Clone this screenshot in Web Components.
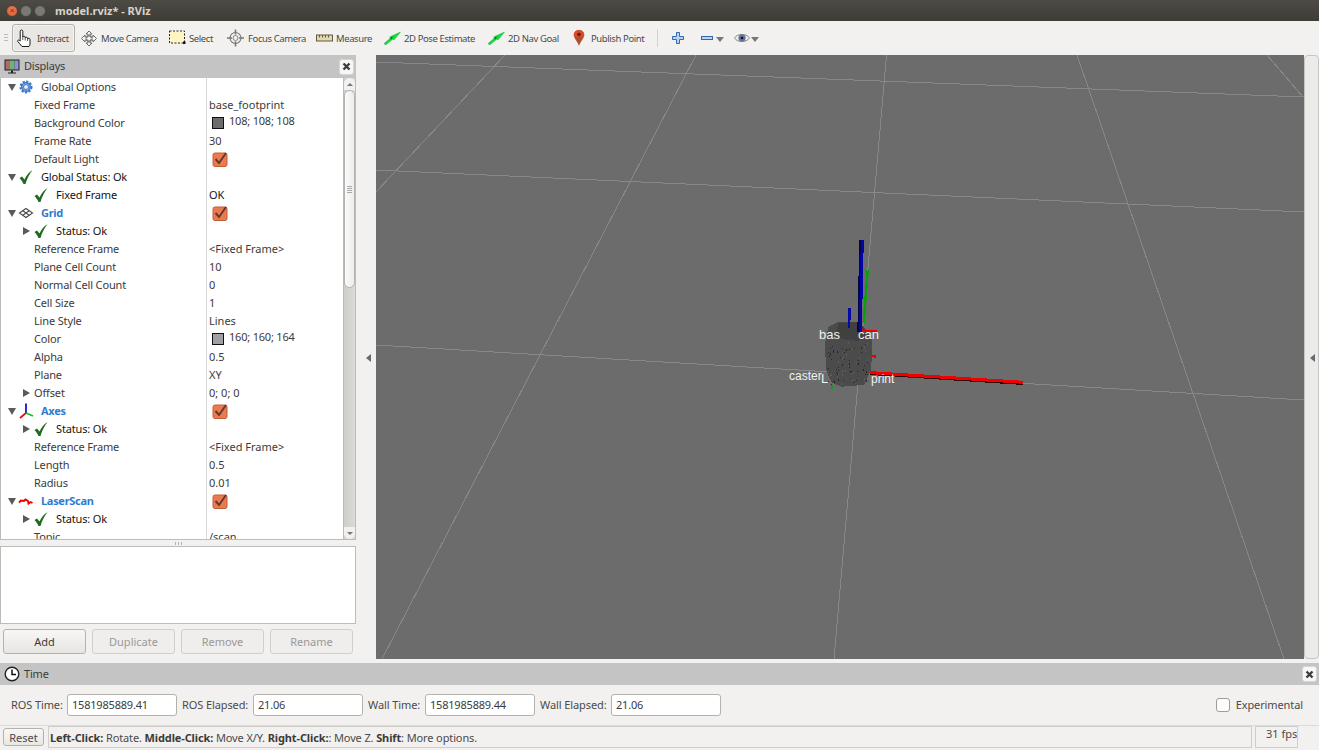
<!DOCTYPE html>
<html>
<head>
<meta charset="utf-8">
<title>model.rviz* - RViz</title>
<style>
  html, body { margin: 0; padding: 0; background: #f2f1f0; overflow: hidden; }
  body { font-family: "Noto Sans", sans-serif; font-size: 11px; color: #3c3b37; }
</style>
</head>
<body>
<rviz-app>
  <title-bar slot="title" text="model.rviz* - RViz"></title-bar>
  <tool-bar slot="tools">
    <tool-button icon="hand" label="Interact" width="63" active></tool-button>
    <tool-button icon="move" label="Move Camera" width="88"></tool-button>
    <tool-button icon="select" label="Select" width="58"></tool-button>
    <tool-button icon="focus" label="Focus Camera" width="89"></tool-button>
    <tool-button icon="measure" label="Measure" width="68"></tool-button>
    <tool-button icon="arrow" label="2D Pose Estimate" width="104"></tool-button>
    <tool-button icon="arrow" label="2D Nav Goal" width="85"></tool-button>
    <tool-button icon="pin" label="Publish Point" width="82"></tool-button>
  </tool-bar>
  <displays-panel slot="left">
    <prop-row arrow="open" icon="gear" label="Global Options"></prop-row>
    <prop-row level="1" label="Fixed Frame" value="base_footprint"></prop-row>
    <prop-row level="1" label="Background Color" swatch="#6c6c6c" value="108; 108; 108"></prop-row>
    <prop-row level="1" label="Frame Rate" value="30"></prop-row>
    <prop-row level="1" label="Default Light" checked></prop-row>
    <prop-row arrow="open" icon="check" label="Global Status: Ok" dark></prop-row>
    <prop-row level="1" icon="check" label="Fixed Frame" value="OK" dark></prop-row>
    <prop-row arrow="open" icon="grid" label="Grid" group checked></prop-row>
    <prop-row level="1" arrow="closed" icon="check" label="Status: Ok" dark></prop-row>
    <prop-row level="1" label="Reference Frame" value="&lt;Fixed Frame&gt;"></prop-row>
    <prop-row level="1" label="Plane Cell Count" value="10"></prop-row>
    <prop-row level="1" label="Normal Cell Count" value="0"></prop-row>
    <prop-row level="1" label="Cell Size" value="1"></prop-row>
    <prop-row level="1" label="Line Style" value="Lines"></prop-row>
    <prop-row level="1" label="Color" swatch="#a0a0a4" value="160; 160; 164"></prop-row>
    <prop-row level="1" label="Alpha" value="0.5"></prop-row>
    <prop-row level="1" label="Plane" value="XY"></prop-row>
    <prop-row level="1" arrow="closed" label="Offset" value="0; 0; 0"></prop-row>
    <prop-row arrow="open" icon="axes" label="Axes" group checked></prop-row>
    <prop-row level="1" arrow="closed" icon="check" label="Status: Ok" dark></prop-row>
    <prop-row level="1" label="Reference Frame" value="&lt;Fixed Frame&gt;"></prop-row>
    <prop-row level="1" label="Length" value="0.5"></prop-row>
    <prop-row level="1" label="Radius" value="0.01"></prop-row>
    <prop-row arrow="open" icon="laser" label="LaserScan" group checked></prop-row>
    <prop-row level="1" arrow="closed" icon="check" label="Status: Ok" dark></prop-row>
    <prop-row level="1" label="Topic" value="/scan"></prop-row>
  </displays-panel>
  <view-3d slot="view"></view-3d>
  <time-panel slot="time"></time-panel>
  <status-bar slot="status"></status-bar>
</rviz-app>

<script>
const ICONS = {
  hand: '<path d="M3.200 10.500V2.200c0-1.600 2.600-1.600 2.600 0V8c.2-1 2.200-1 2.400 0v1c.2-1 2.200-1 2.400.1v1c.2-1 2.200-1 2.400.1V15c0 1-.5 1.500-1 2.500H5C3.500 15.500 2 14 .8 12.500c-.7-1.200.8-2.300 2.400-.5z" fill="#fff" stroke="#1a1a1a" stroke-width="1" stroke-linejoin="round"/><path d="M5.800 8v3M8.200 9v2.500M10.600 10v2" stroke="#1a1a1a" stroke-width=".7"/>',
  move: '<path d="M10 .5l3 3h-2v3h3v-2l3.500 3.500-3.500 3.500v-2h-3v3h2l-3 3-3-3h2v-3H6v2L2.500 8 6 4.500v2h3v-3H7z" transform="translate(-2 1.500)" fill="#f4f4f2" stroke="#6b6b6b" stroke-width="1"/><circle cx="8" cy="9.500" r="3" fill="none" stroke="#777" stroke-width="1"/>',
  select: '<rect x=".5" y="2" width="15" height="12" fill="#fdf6c3" stroke="#222" stroke-width="1" stroke-dasharray="2 1.500"/><rect x="14" y="12.500" width="2.500" height="2.500" fill="#111"/>',
  focus: '<circle cx="8.500" cy="9" r="5.500" fill="#eee" stroke="#777" stroke-width="1.100"/><circle cx="8.500" cy="9" r="2.500" fill="none" stroke="#888"/><path d="M8.500 .5v5M8.500 12.500v5M0 9h5M12 9h5" stroke="#777" stroke-width="1.600"/>',
  measure: '<rect x=".5" y="6" width="16" height="6" fill="#e3d9a6" stroke="#5d5a4c" stroke-width="1"/><path d="M3.500 6v2.500M6.500 6v2.500M9.500 6v2.500M12.500 6v2.500" stroke="#5d5a4c" stroke-width="1"/>',
  arrow: '<path d="M0 14.500L6.500 9 5.500 8 16.500 3 10 11 9 10 1.500 16z" fill="#11e036" stroke="#0aa627" stroke-width=".4"/><path d="M6.500 10l2-1.800" stroke="#064" stroke-width="1.200"/>',
  pin: '<path d="M6 1C3 1 .8 3.200.8 6c0 3.300 3.300 5.500 5.200 11 1.900-5.500 5.200-7.700 5.200-11C11.200 3.200 9 1 6 1z" fill="#a9502c"/><path d="M6 1C3 1 .8 3.200.8 6c0 .7.2 1.400.5 2h9.400c.3-.6.5-1.300.5-2C11.200 3.200 9 1 6 1z" fill="#d9492c"/><circle cx="6" cy="5.500" r="1.800" fill="#5a2413"/>',
  plus: '<path d="M4.500 .5h3v4h4v3h-4v4h-3v-4h-4v-3h4z" fill="#bcd3ee" stroke="#2f6ab0" stroke-width="1"/>',
  minus: '<rect x=".5" y="1.500" width="11" height="3" fill="#bcd3ee" stroke="#2f6ab0" stroke-width="1"/>',
  eye: '<path d="M.5 6C3 1.500 12 1 15.500 6 12 11 3 10.500.5 6z" fill="#eee" stroke="#888"/><circle cx="8" cy="6" r="3.300" fill="#5d74ad" stroke="#666" stroke-width=".6"/><circle cx="8" cy="6" r="1.300" fill="#111"/>',
  gear: '<circle cx="7" cy="8" r="5" fill="#8db2e4" stroke="#3f78c4" stroke-width="3" stroke-dasharray="2 1.300"/><circle cx="7" cy="8" r="4.500" fill="none" stroke="#3f78c4" stroke-width="1"/><circle cx="7" cy="8" r="2.500" fill="#e6eef9" stroke="#3f78c4" stroke-width="1"/>',
  check: '<path d="M.5 8.500l2.500-1.500 2.500 3C7.500 6 10 2.500 13.500.5 10.500 4.500 8 9 6.500 14.500H4.500C3.500 12 2 10 .5 8.500z" fill="#1f6b1f" transform="translate(0 .5)"/>',
  grid: '<path d="M.5 8L7 3.500 13.500 8 7 12.500z" fill="none" stroke="#4b4b4b" stroke-width="1.100"/><path d="M3.800 5.700L10.200 10.300M10.200 5.700L3.800 10.300" stroke="#4b4b4b" stroke-width="1.100"/>',
  axes: '<path d="M7 .5V10" stroke="#1414c8" stroke-width="1.800"/><path d="M7 10L1 15" stroke="#e01010" stroke-width="1.800"/><path d="M7 10l7 3" stroke="#10c030" stroke-width="1.800"/>',
  laser: '<path d="M0 9.500l2-2 3 .5 1.500-1.500 2.500 1.500.5 2.500 2-1.500 2 1" fill="none" stroke="#ee0000" stroke-width="1.900"/>',
  monitor: '<rect x=".5" y=".5" width="15" height="11" fill="#222"/><rect x="1.500" y="1.500" width="4.500" height="9" fill="#b06a6a"/><rect x="6" y="1.500" width="4.500" height="9" fill="#6fb36f"/><rect x="10.500" y="1.500" width="4" height="9" fill="#8f8fd6"/><path d="M7 11.500h2v2h3v1H4v-1h3z" fill="#222"/>',
  clock: '<circle cx="8" cy="8" r="6.800" fill="#fff" stroke="#222" stroke-width="1.400"/><path d="M8 3.500V8.500H12" fill="none" stroke="#111" stroke-width="1.500"/>'
};

const svgIcon = (name, w, h) => `<svg width="${w}" height="${h}" viewBox="0 0 ${w} ${h}" style="display:block;overflow:visible;flex:none">${ICONS[name]}</svg>`;

class RvizApp extends HTMLElement {
  constructor() { super(); this.attachShadow({ mode: 'open' }); }
  connectedCallback() {
    this.shadowRoot.innerHTML = `
      <style>
        :host { display: flex; flex-direction: column; width: 1319px; height: 750px; background: #f2f1f0; overflow: hidden; }
        .main { display: flex; height: 604px; }
        .view { flex: 1; display: flex; min-width: 0; }
        .handle { width: 20px; box-sizing: border-box; padding: 2px 0 0 4px; display: flex; align-items: center; justify-content: center; }
        .tri { width: 0; height: 0; border-style: solid; border-width: 4px 5px 4px 0; border-color: transparent #6a6a6a transparent transparent; }
        .right { width: 15px; box-sizing: border-box; padding: 2px 0 0 1px; display: flex; align-items: center; justify-content: center; background: #ecebe9; border: 1px solid #c6c5c2; border-radius: 4px; }
      </style>
      <slot name="title"></slot>
      <slot name="tools"></slot>
      <div class="main">
        <slot name="left"></slot>
        <div class="handle"><div class="tri"></div></div>
        <div class="view"><slot name="view"></slot></div>
        <div class="right"><div class="tri"></div></div>
      </div>
      <slot name="time"></slot>
      <slot name="status"></slot>`;
  }
}

class TitleBar extends HTMLElement {
  constructor() { super(); this.attachShadow({ mode: 'open' }); }
  connectedCallback() {
    this.shadowRoot.innerHTML = `
      <style>
        :host { display: flex; align-items: center; height: 21px; background: linear-gradient(#4e4b45, #3d3c37); padding-left: 6px; box-sizing: border-box; }
        .b { width: 12px; height: 12px; border-radius: 50%; margin-right: 2px; background: #7b7974; border: 1px solid #45443f; box-sizing: border-box; }
        .b.c { background: radial-gradient(circle at 50% 40%, #ee8258, #d8552b); display: flex; align-items: center; justify-content: center; font: bold 8px "Liberation Sans", sans-serif; color: #8a3a20; }
        .t { margin-left: 9px; font: bold 11px "Noto Sans", sans-serif; color: #d8d4ca; white-space: nowrap; }
      </style>
      <div class="b c">×</div><div class="b"></div><div class="b" style="margin-right:0"></div>
      <div class="t">${this.getAttribute('text')}</div>`;
  }
}

class ToolBar extends HTMLElement {
  constructor() { super(); this.attachShadow({ mode: 'open' }); }
  connectedCallback() {
    this.shadowRoot.innerHTML = `
      <style>
        :host { display: flex; align-items: center; height: 34px; background: #f2f1f0; box-sizing: border-box; padding-left: 4px; }
        .grip { width: 4px; height: 9px; margin-right: 4px; background: repeating-linear-gradient(#bdbbb7 0 1px, transparent 1px 3px); flex: none; }
        .sep { width: 1px; height: 18px; background: #d3d1ce; margin: 0 14px 0 7px; flex: none; }
        .i { display: flex; align-items: center; flex: none; }
        .down { width: 0; height: 0; border-style: solid; border-width: 5px 4px 0 4px; border-color: #77767a transparent transparent transparent; margin: 3px 0 0 3px; }
      </style>
      <div class="grip"></div>
      <slot></slot>
      <div class="sep"></div>
      <div class="i" style="margin-right:17px">${svgIcon('plus', 12, 12)}</div>
      <div class="i" style="margin-right:10px">${svgIcon('minus', 12, 6)}<div class="down"></div></div>
      <div class="i">${svgIcon('eye', 16, 12)}<div class="down" style="margin-left:1px"></div></div>`;
  }
}

class ToolButton extends HTMLElement {
  constructor() { super(); this.attachShadow({ mode: 'open' }); }
  connectedCallback() {
    const name = this.getAttribute('icon');
    const w = name === 'pin' ? 13 : name === 'hand' ? 16 : 17;
    const gap = name === 'pin' ? 5 : name === 'hand' ? 4 : name === 'focus' ? 4 : 3;
    this.shadowRoot.innerHTML = `
      <style>
        :host { display: flex; align-items: center; flex: none; box-sizing: border-box; height: 28px; padding-left: 5px; width: ${this.getAttribute('width')}px; color: #4b4a48; font: 9.5px "Noto Sans", sans-serif; letter-spacing: -.4px; white-space: nowrap; }
        :host([active]) { padding-left: 4px; margin-right: 1px; background: #e9e7e4; border: 1px solid #b4b2ad; border-radius: 3px; box-shadow: inset 0 0 0 1px #f5f4f2; }
        span { margin-left: ${gap}px; }
      </style>
      ${svgIcon(name, w, 18)}<span>${this.getAttribute('label')}</span>`;
  }
}

class DockHeader extends HTMLElement {
  constructor() { super(); this.attachShadow({ mode: 'open' }); }
  connectedCallback() {
    this.shadowRoot.innerHTML = `
      <style>
        :host { display: flex; align-items: center; background: #c4c4c4; box-sizing: border-box; padding: 0 2px 0 4px; color: #3c3b37; font: 11px "Noto Sans", sans-serif; letter-spacing: -.2px; }
        svg { flex: none; }
        .n { margin-left: 4px; flex: 1; padding-bottom: 2px; }
        .x { width: 15px; height: 16px; box-sizing: border-box; background: #f7f7f6; border: 1px solid #d6d6d6; border-radius: 3px; display: flex; align-items: center; justify-content: center; }
      </style>
      ${svgIcon(this.getAttribute('icon'), 16, 16)}
      <div class="n">${this.getAttribute('label')}</div>
      <div class="x"><svg width="9" height="9" viewBox="0 0 9 9"><path d="M1.500 1.500l6 6M7.500 1.500l-6 6" stroke="#3c3c3c" stroke-width="2.400"/></svg></div>`;
  }
}

class PropRow extends HTMLElement {
  constructor() { super(); this.attachShadow({ mode: 'open' }); }
  connectedCallback() {
    const level = +(this.getAttribute('level') || 0);
    const arrow = this.getAttribute('arrow');
    const icon = this.getAttribute('icon');
    const value = this.getAttribute('value');
    const swatch = this.getAttribute('swatch');
    let tri = '';
    if (arrow === 'open') tri = '<svg width="8" height="7" viewBox="0 0 8 7"><path d="M0 0h8L4 7z" fill="#5a5a5a"/></svg>';
    if (arrow === 'closed') tri = '<svg width="7" height="8" viewBox="0 0 7 8"><path d="M0 0l7 4-7 4z" fill="#5a5a5a"/></svg>';
    let cell = '';
    if (this.hasAttribute('checked')) {
      cell = `<svg class="cb" width="16" height="16" viewBox="0 0 16 16"><rect x="1" y="2" width="14" height="13.500" rx="2" fill="#ea7a50" stroke="#c65c35"/><path d="M3.500 8l3.500 4 7-10" fill="none" stroke="#5c3a2c" stroke-width="1.900"/></svg>`;
    } else if (swatch) {
      cell = `<i style="background:${swatch}"></i><span class="sw">${value}</span>`;
    } else if (value !== null) {
      cell = `<span class="v">${value.replace(/</g, '&lt;')}</span>`;
    }
    this.shadowRoot.innerHTML = `
      <style>
        :host { display: grid; grid-template-columns: 206px 1fr; height: 18px; color: #3c3b37; font: 11px "Noto Sans", sans-serif; white-space: nowrap; }
        :host([dark]) { color: #141414; }
        :host([group]) .l { color: #2f7bd2; font-weight: bold; letter-spacing: -.3px; }
        .a { display: flex; align-items: center; padding-left: ${level ? 20 : 5}px; height: 18px; border-right: 1px solid #d9d8d6; box-sizing: border-box; }
        .t { width: 13px; flex: none; display: flex; align-items: center; padding-left: 2px; box-sizing: border-box; }
        .ic { width: 16px; margin-right: 6px; flex: none; height: 16px; }
        .l { letter-spacing: -.15px; padding-bottom: 2px; }
        .b { display: flex; align-items: center; padding-left: 2px; }
        .v { padding-bottom: 2px; }
        .cb { display: block; margin-left: 3px; overflow: visible; }
        i { width: 10px; height: 10px; border: 1px solid #111; margin: -1px 0 0 3px; flex: none; }
        .sw { margin: -5px 0 0 5px; letter-spacing: -.2px; }
      </style>
      <div class="a">
        <div class="t">${tri}</div>
        ${icon ? `<div class="ic">${svgIcon(icon, 16, 16)}</div>` : ''}
        <span class="l">${this.getAttribute('label')}</span>
      </div>
      <div class="b">${cell}</div>`;
  }
}

class DisplaysPanel extends HTMLElement {
  constructor() { super(); this.attachShadow({ mode: 'open' }); }
  connectedCallback() {
    this.shadowRoot.innerHTML = `
      <style>
        :host { display: flex; flex-direction: column; width: 356px; flex: none; }
        dock-header { height: 23px; flex: none; }
        .tree { display: flex; height: 462px; flex: none; background: #fff; border-left: 1px solid #bdbcb9; border-bottom: 1px solid #bdbcb9; box-sizing: border-box; overflow: hidden; }
        .rows { width: 342px; flex: none; overflow: hidden; background: #fff; }
        scroll-bar { flex: 1; }
        .split { height: 6px; display: flex; align-items: center; justify-content: center; flex: none; }
        .split b { width: 7px; height: 3px; background: repeating-linear-gradient(90deg, #b5b4b1 0 1px, transparent 1px 3px); }
        .blank { height: 78px; flex: none; background: #fff; border: 1px solid #bdbcb9; box-sizing: border-box; }
        .btns { display: flex; gap: 6px; padding: 5px 0 0 3px; }
      </style>
      <dock-header icon="monitor" label="Displays"></dock-header>
      <div class="tree"><div class="rows"><slot></slot></div><scroll-bar></scroll-bar></div>
      <div class="split"><b></b></div>
      <div class="blank"></div>
      <div class="btns">
        <push-button label="Add" width="83"></push-button>
        <push-button label="Duplicate" width="83" disabled></push-button>
        <push-button label="Remove" width="83" disabled></push-button>
        <push-button label="Rename" width="83" disabled></push-button>
      </div>`;
  }
}

class ScrollBar extends HTMLElement {
  constructor() { super(); this.attachShadow({ mode: 'open' }); }
  connectedCallback() {
    this.shadowRoot.innerHTML = `
      <style>
        :host { display: flex; flex-direction: column; background: linear-gradient(90deg, #cfcecb, #dbdad8); box-sizing: border-box; border-left: 1px solid #bdbcb9; border-right: 1px solid #bdbcb9; }
        .u, .d { height: 12px; flex: none; background: #f2f1f0; display: flex; align-items: center; justify-content: center; }
        .u { border-radius: 6px 6px 0 0; }
        .d { border-radius: 0 0 6px 6px; }
        .ti { width: 0; height: 0; border-style: solid; border-width: 0 3px 3px 3px; border-color: transparent transparent #777 transparent; }
        .td { width: 0; height: 0; border-style: solid; border-width: 3px 3px 0 3px; border-color: #777 transparent transparent transparent; }
        .th { height: 198px; flex: none; background: linear-gradient(90deg, #fbfbfa, #eeedeb); border: 1px solid #b4b3b0; border-radius: 6px; box-sizing: border-box; display: flex; align-items: center; justify-content: center; }
        .g { width: 5px; height: 7px; background: repeating-linear-gradient(#aaa 0 1px, transparent 1px 2px); }
        .s { flex: 1; }
      </style>
      <div class="u"><div class="ti"></div></div>
      <div class="th"><div class="g"></div></div>
      <div class="s"></div>
      <div class="d"><div class="td"></div></div>`;
  }
}

class PushButton extends HTMLElement {
  constructor() { super(); this.attachShadow({ mode: 'open' }); }
  connectedCallback() {
    this.shadowRoot.innerHTML = `
      <style>
        :host { display: flex; align-items: center; justify-content: center; box-sizing: border-box; height: 25px; width: ${this.getAttribute('width')}px; flex: none; border: 1px solid #b4b2ad; border-radius: 3px; background: linear-gradient(#f8f7f6, #e6e5e2); color: #3c3b37; font: 11px "Noto Sans", sans-serif; }
        :host([disabled]) { color: #9a9996; border-color: #d0cfcc; background: #efeeec; }
      </style>
      ${this.getAttribute('label')}`;
  }
}

class View3d extends HTMLElement {
  constructor() { super(); this.attachShadow({ mode: 'open' }); }
  connectedCallback() {
    const lines = [
      [376,62,1304,97],[376,170,1304,212],[376,345,1304,400],
      [505,55,376,192],[696,55,382,659],[886.5,55,834,659],[1077,55,1284,659],[1267,55,1303,97]
    ].map(l => `<line x1="${l[0]}" y1="${l[1]}" x2="${l[2]}" y2="${l[3]}"/>`).join('');
    const body = [[175,290],[205,275],[270,280],[300,310],[306,330],[306,375],[303,420],[282,465],[215,470],[185,458],[168,420],[165,340]]
      .map(p => (770 + p[0] / 3) + ',' + (230 + p[1] / 3)).join(' ');
    // speckle on the robot mesh
    let seed = 7, dots = '';
    const rnd = () => (seed = (seed * 16807) % 2147483647) / 2147483647;
    for (let i = 0; i < 80; i++) {
      const x = 828 + rnd() * 41, y = 342 + rnd() * 42;
      const d = rnd();
      dots += `<rect x="${x.toFixed(0)}" y="${y.toFixed(0)}" width="1" height="${d > .5 ? 2 : 1}" fill="${d < .7 ? '#262626' : '#5c5c5c'}"/>`;
    }
    this.shadowRoot.innerHTML = `
      <style>
        :host { display: block; flex: 1; background: #6c6c6c; overflow: hidden; }
        svg { display: block; }
        text { font-family: "Liberation Sans", sans-serif; font-size: 13px; fill: #f0f0f0; }
      </style>
      <svg width="928" height="604" viewBox="376 55 928 604" shape-rendering="crispEdges">
        <g stroke="#88888a" stroke-width="1">${lines}</g>
        <polygon points="${body}" fill="#4b4b4b"/>
        <path d="M838 323l18-1 8 5 1 12-8 2-16-2-4-8z" fill="#404040"/>
        ${dots}
        <g fill="none">
          <path d="M861.300 240L859.300 332" stroke="#05054a" stroke-width="4"/>
          <path d="M862.300 240L860.300 332" stroke="#0404a4" stroke-width="3"/>
          <path d="M867.700 270L863.700 323" stroke="#0ba00b" stroke-width="2.400"/>
          <path d="M849.300 308L849 328" stroke="#0808a8" stroke-width="2.800"/>
          <path d="M861.700 331L877 331.300" stroke="#ee0000" stroke-width="2.400"/>
          <path d="M871.700 356L876 356.600" stroke="#e00000" stroke-width="2.400"/>
          <path d="M870 373.500L1023.300 383.500" stroke="#300" stroke-width="3"/>
          <path d="M870 372.600L1023.300 382.300" stroke="#f00000" stroke-width="3"/>
          <path d="M832.300 385L832.300 389" stroke="#10a010" stroke-width="2"/>
        </g>
        <text x="819" y="339">bas</text>
        <text x="858" y="339">can</text>
        <text x="789" y="380" style="font-size:12px">caster</text>
        <text x="821" y="383">L</text>
        <text x="871" y="383" style="font-size:12px">print</text>
      </svg>`;
  }
}

class TimeField extends HTMLElement {
  constructor() { super(); this.attachShadow({ mode: 'open' }); }
  connectedCallback() {
    this.shadowRoot.innerHTML = `
      <style>
        :host { display: flex; align-items: center; flex: none; }
        .v { width: 110px; height: 22px; box-sizing: border-box; margin-left: 5px; padding: 0 0 2px 4px; display: flex; align-items: center; background: #fff; border: 1px solid #b4b2ad; border-radius: 3px; color: #3c3b37; letter-spacing: -.2px; }
        .l { width: var(--w); text-align: left; white-space: nowrap; letter-spacing: -.1px; padding-bottom: 2px; }
      </style>
      <span class="l" style="--w:${this.getAttribute('lw')}px">${this.getAttribute('label')}</span>
      <div class="v">${this.getAttribute('value')}</div>`;
  }
}

class TimePanel extends HTMLElement {
  constructor() { super(); this.attachShadow({ mode: 'open' }); }
  connectedCallback() {
    this.shadowRoot.innerHTML = `
      <style>
        :host { display: block; margin-top: 4px; font: 11px "Noto Sans", sans-serif; color: #4b4a48; }
        dock-header { height: 22px; }
        .r { display: flex; align-items: center; height: 40px; padding: 0 16px 0 11px; gap: 5px; box-sizing: border-box; }
        .sp { flex: 1; }
        .c { width: 14px; height: 14px; box-sizing: border-box; background: #fdfdfc; border: 1px solid #9d9c98; border-radius: 3px; margin-right: 1px; }
        .e { letter-spacing: -.1px; padding-bottom: 2px; }
      </style>
      <dock-header icon="clock" label="Time"></dock-header>
      <div class="r">
        <time-field label="ROS Time:" lw="51" value="1581985889.41"></time-field>
        <time-field label="ROS Elapsed:" lw="66" value="21.06"></time-field>
        <time-field label="Wall Time:" lw="52" value="1581985889.44"></time-field>
        <time-field label="Wall Elapsed:" lw="66" value="21.06"></time-field>
        <div class="sp"></div>
        <div class="c"></div><span class="e">Experimental</span>
      </div>`;
  }
}

class StatusBar extends HTMLElement {
  constructor() { super(); this.attachShadow({ mode: 'open' }); }
  connectedCallback() {
    this.shadowRoot.innerHTML = `
      <style>
        :host { display: flex; align-items: center; height: 23px; padding-left: 3px; box-sizing: border-box; border-top: 1px solid #dcdbd8; font: 11px "Noto Sans", sans-serif; color: #4b4a48; white-space: nowrap; }
        .reset { width: 41px; height: 18px; box-sizing: border-box; display: flex; align-items: center; justify-content: center; border: 1px solid #b4b2ad; border-radius: 3px; background: linear-gradient(#f8f7f6, #e8e7e4); margin-right: 4px; flex: none; }
        .m { width: 1204px; height: 22px; box-sizing: border-box; padding-left: 1px; display: flex; align-items: center; border: 1px solid #cfcecb; flex: none; }
        .f { width: 43px; height: 22px; box-sizing: border-box; margin-left: 3px; padding-left: 10px; border: 1px solid #cfcecb; flex: none; line-height: 14px; overflow: hidden; }
        b { color: #3c3b37; white-space: pre; }
        span { white-space: pre; letter-spacing: -.12px; }
      </style>
      <div class="reset">Reset</div>
      <div class="m"><span><b>Left-Click:</b> Rotate. <b>Middle-Click:</b> Move X/Y. <b>Right-Click:</b>: Move Z. <b>Shift</b>: More options.</span></div>
      <div class="f">31 fps</div>`;
  }
}

customElements.define('rviz-app', RvizApp);
customElements.define('title-bar', TitleBar);
customElements.define('tool-bar', ToolBar);
customElements.define('tool-button', ToolButton);
customElements.define('dock-header', DockHeader);
customElements.define('prop-row', PropRow);
customElements.define('displays-panel', DisplaysPanel);
customElements.define('scroll-bar', ScrollBar);
customElements.define('push-button', PushButton);
customElements.define('view-3d', View3d);
customElements.define('time-field', TimeField);
customElements.define('time-panel', TimePanel);
customElements.define('status-bar', StatusBar);
</script>
</body>
</html>
